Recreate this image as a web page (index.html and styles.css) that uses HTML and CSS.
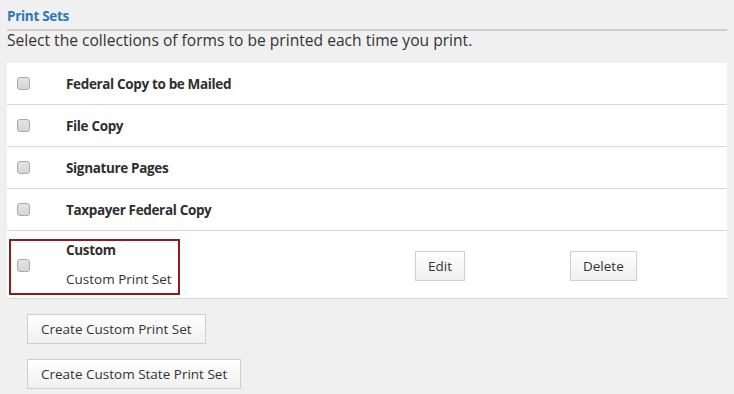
FILE: index.html
```html
<!doctype html>
<html lang="en">
<head>
  <meta charset="utf-8" />
  <meta name="viewport" content="width=device-width, initial-scale=1" />
  <title>Print Sets</title>
  <link rel="stylesheet" href="styles.css">
</head>
<body>
  <main class="wrap">
    <h2 class="title">Print Sets</h2>
    <p class="desc">Select the collections of forms to be printed each time you print.</p>

    <section class="sets" aria-label="Print sets">
      <div class="row">
        <input class="check" type="checkbox" aria-label="Federal Copy to be Mailed">
        <span class="name">Federal Copy to be Mailed</span>
      </div>
      <div class="row">
        <input class="check" type="checkbox" aria-label="File Copy">
        <span class="name">File Copy</span>
      </div>
      <div class="row">
        <input class="check" type="checkbox" aria-label="Signature Pages">
        <span class="name">Signature Pages</span>
      </div>
      <div class="row">
        <input class="check" type="checkbox" aria-label="Taxpayer Federal Copy">
        <span class="name">Taxpayer Federal Copy</span>
      </div>
      <div class="row rowCustom">
        <div class="picked">
          <input class="check" type="checkbox" aria-label="Custom">
          <div class="customText">
            <span class="name">Custom</span>
            <span class="note">Custom Print Set</span>
          </div>
        </div>
        <button class="btn btnEdit" type="button">Edit</button>
        <button class="btn btnDelete" type="button">Delete</button>
      </div>
    </section>

    <div class="createList">
      <button class="btn" type="button">Create Custom Print Set</button>
      <button class="btn" type="button">Create Custom State Print Set</button>
    </div>
  </main>
</body>
</html>
```

FILE: styles.css
```css
*{ box-sizing:border-box; }

body{
  margin:0;
  background:#f0f0f0;
  color:#333;
  font-family:"Open Sans", "Noto Sans", Arial, sans-serif;
  font-size:13.5px;
}

.wrap{ padding:0 7px; }

.title{
  margin:0;
  padding:6px 0 3px;
  font-size:13.5px;
  line-height:20px;
  font-weight:700;
  letter-spacing:-.3px;
  color:#2a79b8;
  border-bottom:2px solid #cdcdcd;
}

.desc{
  margin:0;
  padding:0 0 14px;
  font-size:15.6px;
  line-height:18px;
  color:#333;
}

.sets{ background:#fff; }

.row{
  display:flex;
  align-items:center;
  height:42px;
  border-bottom:1px solid #d6d6d6;
}

.check{
  appearance:none;
  -webkit-appearance:none;
  margin:0 0 0 10px;
  width:13px;
  height:13px;
  border:1px solid #a9a9a9;
  border-radius:3px;
  background:linear-gradient(180deg, #e4e4e4, #d6d6d6);
  flex:none;
}

.name{
  margin-left:36px;
  font-weight:700;
  letter-spacing:-.35px;
  color:#2e2e2e;
}

.rowCustom{
  height:68px;
  align-items:flex-start;
}

.picked{
  display:flex;
  align-items:flex-start;
  margin:8px 0 0 2px;
  width:171px;
  height:56px;
  border:2px solid #8e1b1e;
}
.picked .check{ margin:18px 0 0 6px; }

.customText{
  display:flex;
  flex-direction:column;
  gap:11px;
  line-height:18px;
}
.note{
  margin-left:36px;
  color:#333;
}

.btn{
  font:inherit;
  color:#333;
  height:30px;
  padding:0 12px;
  border:1px solid #cfcfcf;
  border-radius:0;
  background:linear-gradient(180deg, #fff, #f0f0f0);
  cursor:pointer;
}

.btnEdit{ margin:20px 0 0 235px; }
.btnDelete{ margin:20px 0 0 105px; }

.createList{
  display:flex;
  flex-direction:column;
  align-items:flex-start;
  gap:15px;
  padding:15px 0 0 20px;
}
.createList .btn{ padding:0 13px; }
```
